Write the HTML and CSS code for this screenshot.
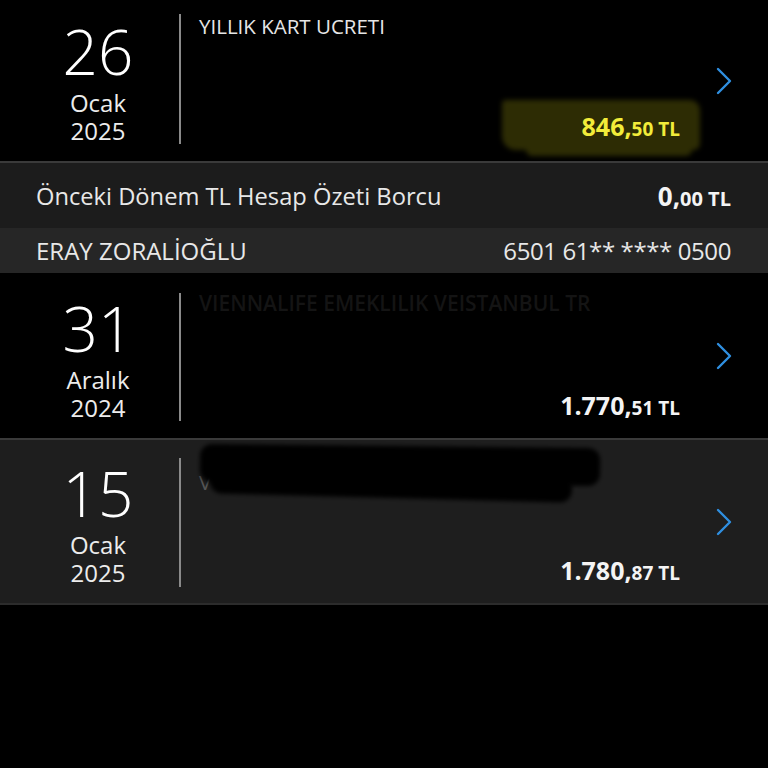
FILE: index.html
```html
<!DOCTYPE html>
<html lang="tr">
<head>
<meta charset="utf-8">
<link rel="stylesheet" href="styles.css">
</head>
<body>
<div class="list">
  <div class="txn txn-first">
    <div class="date">
      <div class="day">26</div>
      <div class="month">Ocak</div>
      <div class="year">2025</div>
    </div>
    <div class="divider"></div>
    <div class="body">
      <div class="title">YILLIK KART UCRETI</div>
      <div class="amount amount-yellow"><span class="int">846,</span><span class="dec">50 TL</span></div>
    </div>
    <svg class="chev" viewBox="0 0 16 28" width="16" height="28"><polyline points="2,2 14,14 2,26" fill="none" stroke="#2f8fe0" stroke-width="2.4" stroke-linecap="round" stroke-linejoin="round"/></svg>
    <div class="marker"></div>
  </div>
  <div class="summary">
    <span>Önceki Dönem TL Hesap Özeti Borcu</span>
    <span class="sum-amount"><span class="int">0,</span><span class="dec">00 TL</span></span>
  </div>
  <div class="card">
    <span>ERAY ZORALİOĞLU</span>
    <span class="card-no">6501 61** **** 0500</span>
  </div>
  <div class="txn txn-second">
    <div class="date">
      <div class="day">31</div>
      <div class="month">Aralık</div>
      <div class="year">2024</div>
    </div>
    <div class="divider"></div>
    <div class="body">
      <div class="title title-faded">VIENNALIFE EMEKLILIK VEISTANBUL TR</div>
      <div class="amount"><span class="int">1.770,</span><span class="dec">51 TL</span></div>
    </div>
    <svg class="chev" viewBox="0 0 16 28" width="16" height="28"><polyline points="2,2 14,14 2,26" fill="none" stroke="#2f8fe0" stroke-width="2.4" stroke-linecap="round" stroke-linejoin="round"/></svg>
  </div>
  <div class="txn txn-third">
    <div class="date">
      <div class="day">15</div>
      <div class="month">Ocak</div>
      <div class="year">2025</div>
    </div>
    <div class="divider"></div>
    <div class="body">
      <div class="title title-hidden">V</div>
      <div class="amount"><span class="int">1.780,</span><span class="dec">87 TL</span></div>
    </div>
    <svg class="chev" viewBox="0 0 16 28" width="16" height="28"><polyline points="2,2 14,14 2,26" fill="none" stroke="#2f8fe0" stroke-width="2.4" stroke-linecap="round" stroke-linejoin="round"/></svg>
    <div class="scribble scribble-a"></div>
    <div class="scribble scribble-b"></div>
  </div>
</div>
</body>
</html>
```
FILE: styles.css
```css
html, body {
  margin: 0;
  padding: 0;
  background: #000;
}
body {
  width: 768px;
  height: 768px;
  overflow: hidden;
  font-family: "Open Sans", "Noto Sans", sans-serif;
  color: #f2f2f2;
}
.list {
  display: flex;
  flex-direction: column;
}
.txn {
  position: relative;
  display: flex;
  align-items: stretch;
  background: #000;
}
.txn-first {
  height: 161px;
  border-bottom: 2px solid #3a3a3a;
}
.txn-second {
  height: 165px;
  border-bottom: 2px solid #3a3a3a;
}
.txn-third {
  height: 163px;
  background: #1e1e1e;
  border-bottom: 2px solid #2c2c2c;
}
.date {
  width: 162px;
  margin-left: 17px;
  padding-top: 20px;
  text-align: center;
}
.txn-second .date {
  padding-top: 24px;
}
.txn-third .date {
  padding-top: 22px;
}
.day {
  font-size: 62px;
  font-weight: 300;
  line-height: 62px;
  color: #fff;
}
.month, .year {
  font-size: 24px;
  line-height: 26px;
  color: #ececec;
}
.month {
  margin-top: 8px;
}
.year {
  margin-top: 2px;
}
.divider {
  width: 2px;
  background: #8a8a8a;
  margin: 14px 0 17px;
}
.txn-second .divider {
  margin: 20px 0 17px;
}
.txn-third .divider {
  margin: 18px 0 16px;
}
.body {
  flex: 1;
  display: flex;
  flex-direction: column;
  margin-left: 18px;
  padding-top: 14px;
  padding-bottom: 17px;
}
.txn-second .body, .txn-third .body {
  padding-top: 18px;
  padding-bottom: 15px;
}
.title {
  font-size: 20.5px;
  line-height: 24px;
  color: #e6e6e6;
}
.title-faded {
  color: #141414;
  font-weight: 600;
  font-size: 21px;
}
.title-hidden {
  color: #555;
  margin-top: 12px;
}
.amount {
  margin-top: auto;
  text-align: right;
  font-weight: 700;
  line-height: 28px;
  color: #f4f4f4;
  position: relative;
  z-index: 2;
}
.amount-yellow {
  color: #f2ec3a;
}
.int {
  font-size: 25px;
}
.dec {
  font-size: 19px;
}
.chev {
  align-self: center;
  margin: 0 36px;
  flex: none;
}
.marker {
  position: absolute;
  left: 502px;
  top: 100px;
  width: 198px;
  height: 50px;
  background: #2d2c04;
  border-radius: 4px 10px 6px 14px;
  filter: blur(2.5px);
  z-index: 1;
}
.marker::after {
  content: "";
  position: absolute;
  left: 24px;
  top: 38px;
  width: 166px;
  height: 18px;
  background: #2d2c04;
  border-radius: 6px;
}
.summary, .card {
  display: flex;
  justify-content: space-between;
  align-items: center;
  padding: 0 37px 0 36px;
  font-size: 24px;
  color: #e8e8e8;
}
.summary {
  height: 65px;
  background: #1c1c1c;
  font-size: 23.7px;
}
.sum-amount {
  font-weight: 700;
  color: #f4f4f4;
}
.sum-amount .int {
  font-size: 26px;
}
.sum-amount .dec {
  font-size: 20px;
}
.card {
  height: 45px;
  background: #262626;
}
.card-no {
  letter-spacing: -0.4px;
}
.scribble {
  position: absolute;
  background: #000;
  filter: blur(2px);
  border-radius: 12px;
}
.scribble-a {
  left: 200px;
  top: 6px;
  width: 400px;
  height: 38px;
  transform: rotate(0.6deg);
}
.scribble-b {
  left: 210px;
  top: 32px;
  width: 362px;
  height: 26px;
  transform: rotate(1.5deg);
}
```
